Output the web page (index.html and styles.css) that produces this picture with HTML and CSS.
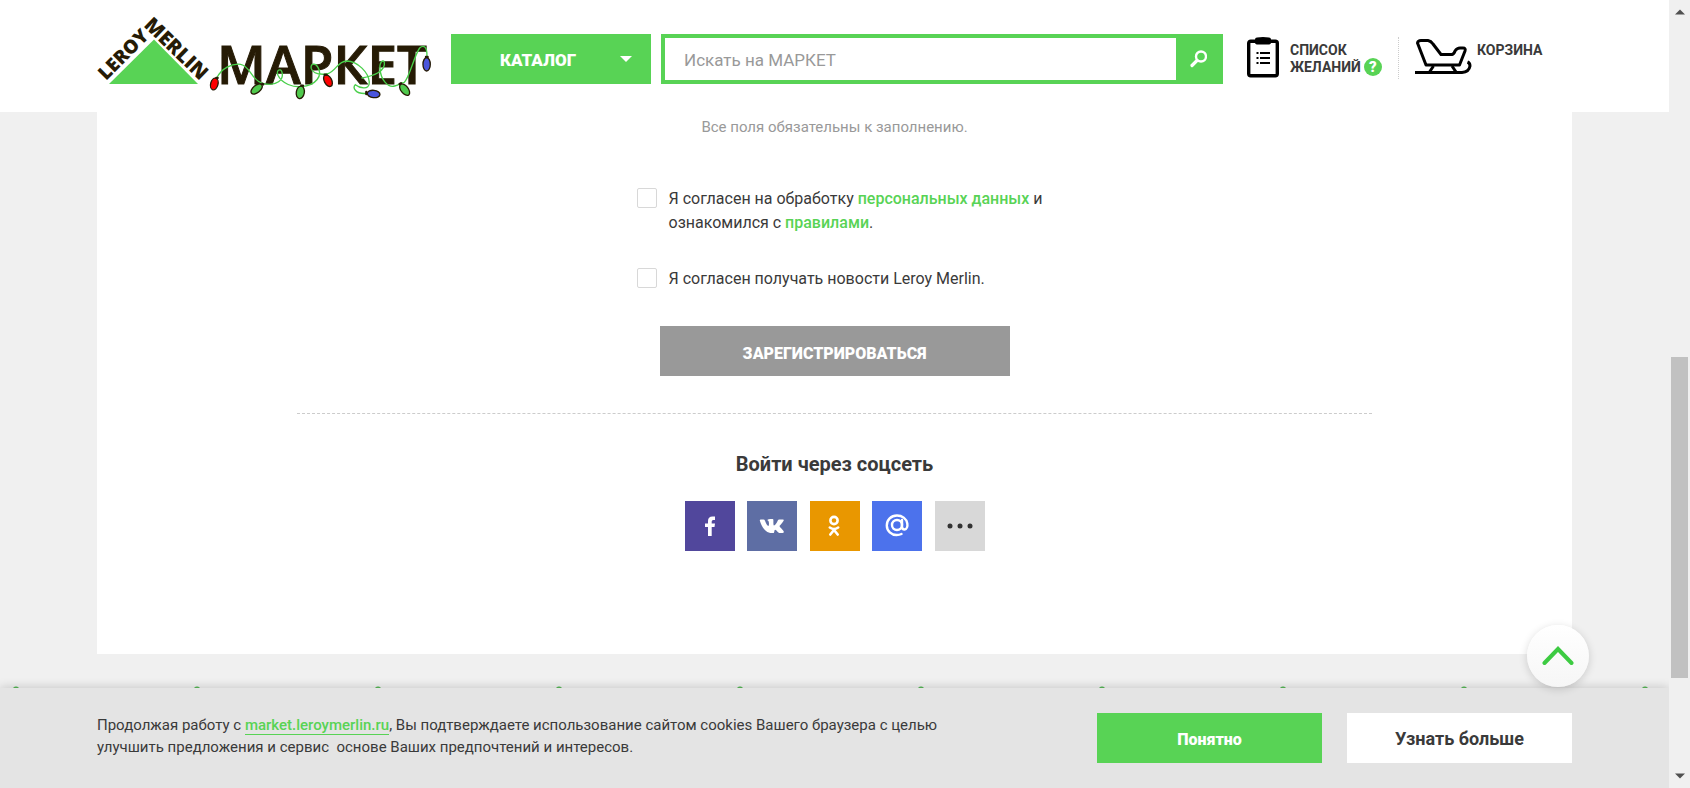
FILE: index.html
```html
<!DOCTYPE html>
<html lang="ru">
<head>
<meta charset="utf-8">
<meta name="viewport" content="width=device-width, initial-scale=1">
<title>Леруа Мерлен МАРКЕТ — Регистрация</title>
<link rel="stylesheet" href="styles.css">
</head>
<body>
<div class="page">
  <header class="header">
    <a class="logo" href="#" aria-label="Leroy Merlin МАРКЕТ">
      <svg class="logo-art" width="336" height="112" viewBox="97 0 336 112">
        <path d="M154 39.500 198 84H109Z" fill="#58d355"/>
        <g class="logo-text" fill="#261b05">
          <text font-size="19" transform="translate(106 81) rotate(-45)">LEROY</text>
          <text font-size="20" transform="translate(143 26) rotate(44)">MERLIN</text>
          <text class="logo-market" x="217" y="84" font-size="53">МАРКЕТ</text>
        </g>
        <g transform="translate(80 0) scale(.3333)" stroke-linecap="round">
          <g fill="none" stroke="#49cf4a" stroke-width="4">
            <path d="M410 234C425 205 455 190 482 193C512 198 512 240 548 250C590 262 614 238 605 214C600 204 588 212 594 226C606 252 640 262 664 260C710 256 728 226 714 202C706 188 690 190 694 206C699 222 722 224 742 222"/>
            <path d="M742 222C770 212 772 184 800 183C834 184 866 218 868 246C869 274 836 262 826 254C818 262 824 284 862 280"/>
            <path d="M846 234C880 228 918 214 913 186C909 178 898 186 900 206C902 240 925 264 944 258C962 254 962 246 972 248C988 236 1002 168 1019 144C1030 134 1042 138 1041 170"/>
          </g>
          <g stroke="#261b05" stroke-width="4">
            <ellipse cx="403" cy="252" rx="11" ry="18" fill="#f00" transform="rotate(15 403 252)"/>
            <ellipse cx="530" cy="267" rx="11" ry="20" fill="#4fc94d" transform="rotate(50 530 267)"/>
            <ellipse cx="661" cy="277" rx="12" ry="19" fill="#4fc94d" transform="rotate(10 661 277)"/>
            <ellipse cx="744" cy="242" rx="11" ry="19" fill="#f00" transform="rotate(-28 744 242)"/>
            <ellipse cx="881" cy="282" rx="19" ry="11" fill="#4a55dc" transform="rotate(6 881 282)"/>
            <ellipse cx="974" cy="269" rx="11" ry="20" fill="#4fc94d" transform="rotate(-38 974 269)"/>
            <ellipse cx="1040" cy="193" rx="11" ry="20" fill="#4a55dc"/>
            <path d="M409 234h4M547 251l3 2M664 257h5M734 224h5M859 276v6M959 252l4-2M1038 171h5" stroke-width="7"/>
          </g>
        </g>
      </svg>
    </a>
    <button class="catalog" type="button">
      <span class="catalog-label">КАТАЛОГ</span>
      <svg class="catalog-arrow" width="12" height="6" viewBox="0 0 12 6"><path d="M0 0H12L6 6Z" fill="#fff"/></svg>
    </button>
    <form class="search" role="search">
      <input class="search-input" type="search" placeholder="Искать на МАРКЕТ" aria-label="Искать на МАРКЕТ">
      <button class="search-button" type="button" aria-label="Найти">
        <svg width="18" height="18" viewBox="0 0 18 18" fill="none" stroke="#fff"><circle cx="12" cy="6.500" r="5" stroke-width="2.400"/><path d="M8 10.500 3 15.500" stroke-width="3.200" stroke-linecap="round"/></svg>
      </button>
    </form>
    <nav class="tools">
      <div class="wishlist">
        <svg width="32" height="42" viewBox="0 0 32 42"><rect x="1.700" y="4.200" width="28.600" height="34.600" rx="2" fill="#fff" stroke="#000" stroke-width="3.400"/><path d="M8 2.500Q8 .500 10 .500Q16-.500 22 .500Q24 .500 24 2.500V5.500Q24 7.500 21 7.500H11Q8 7.500 8 5.500Z"/><path d="M13 16H23M13 21H23M13 26H23" stroke="#000" stroke-width="2"/><path d="M9.500 16h2M9.500 21h2M9.500 26h2" stroke="#000" stroke-width="2"/></svg>
        <div class="tool-label"><a class="tool-link" href="#">СПИСОК<br>ЖЕЛАНИЙ</a><button class="help" type="button" aria-label="Что такое список желаний?">?</button></div>
      </div>
      <a class="tool-link cart" href="#">
        <svg width="57" height="36" viewBox="0 0 57 36" fill="none" stroke="#000" stroke-width="3" stroke-linejoin="round"><path d="M2.500 4Q3 1.500 6 1.500H13Q16 2 18 5L26 15.500H37Q39 15 40 12Q42 9 45 9H48Q51 9 50 12L44.500 26H11L2.500 4Z"/><path d="M18.500 27 14.500 33M37 27 41 33"/><path d="M0 33.500H47Q54 33 55 27Q55 24 52.500 23"/></svg>
        <span>КОРЗИНА</span>
      </a>
    </nav>
  </header>

  <main class="main">
    <form class="panel">
      <p class="note">Все поля обязательны к заполнению.</p>
      <div class="consents">
        <div class="consent">
          <input class="check" type="checkbox" id="agree-data">
          <label for="agree-data">Я согласен на обработку <a href="#">персональных данных</a> и ознакомился с <a href="#">правилами</a>.</label>
        </div>
        <div class="consent">
          <input class="check" type="checkbox" id="agree-news">
          <label for="agree-news">Я согласен получать новости Leroy Merlin.</label>
        </div>
      </div>
      <button class="register" type="button">ЗАРЕГИСТРИРОВАТЬСЯ</button>
      <div class="divider"></div>
      <h2 class="social-title">Войти через соцсеть</h2>
      <div class="socials">
        <button class="social fb" type="button" aria-label="Facebook"><svg width="24" height="24" viewBox="0 0 24 24"><path d="M10 22V13H7V9.500H10V7Q10 2.500 14.500 2.500H17V6H15.200Q13.700 6 13.700 7.500V9.500H17L16.500 13H13.700V22Z" fill="#fff"/></svg></button>
        <button class="social vk" type="button" aria-label="ВКонтакте"><svg width="26" height="24" viewBox="0 0 26 24"><path d="M13 19C6.500 19 3 13.500.800 6.500Q.700 5.500 1.700 5.500H4.500Q5.500 5.500 6 6.800C7 9.800 8.500 12 9.300 12C10.200 12 10.200 8 9.400 7Q9 6.400 8.300 6.200C9 5 14 4.800 14.300 5.600C14.600 6.400 14 11.300 15 11.500C16 11.600 18 8.600 18.800 6.500Q19.200 5.500 20.200 5.500H24C27 5.500 20.500 11.500 20.500 12.300C20.500 13 25.500 17 24.800 18.300Q24.500 19 23.500 19H20.600C19.200 19 17.300 15.700 16.200 15.700C15 15.700 15.700 19 14.400 19Z" fill="#fff"/></svg></button>
        <button class="social ok" type="button" aria-label="Одноклассники"><svg width="24" height="24" viewBox="0 0 24 24" fill="none" stroke="#fff" stroke-width="2.600" stroke-linecap="round"><circle cx="11" cy="6.500" r="3.600"/><path d="M6.800 13.500Q11 16.500 15.200 13.500M11 16 7.300 20.500M11 16 14.700 20.500"/></svg></button>
        <button class="social mail" type="button" aria-label="Mail.ru"><svg width="26" height="26" viewBox="0 0 26 26" fill="none" stroke="#fff" stroke-width="2.400" stroke-linecap="round"><circle cx="13" cy="12" r="5"/><path d="M18 7V13.500Q18 16.500 20.500 16.500C23 16 23.700 13 23.300 10.500C22.500 5.500 18 2.500 13 2.500C7 2.500 2.800 7 2.800 12.500C2.800 18 7.500 22 12.500 22Q15.500 22 17.500 21"/></svg></button>
        <button class="social more" type="button" aria-label="Другие соцсети"><svg width="26" height="6" viewBox="0 0 26 6" fill="#333"><circle cx="3" cy="3" r="2.500"/><circle cx="13" cy="3" r="2.500"/><circle cx="23" cy="3" r="2.500"/></svg></button>
      </div>
    </form>
  </main>

  <div class="garland"></div>

  <section class="cookies">
    <p class="cookies-text">Продолжая работу с <a href="#">market.leroymerlin.ru</a>, Вы подтверждаете использование сайтом cookies Вашего браузера с целью улучшить предложения и сервис &nbsp;основе Ваших предпочтений и интересов.</p>
    <button class="cookie-button accept" type="button">Понятно</button>
    <button class="cookie-button details" type="button">Узнать больше</button>
    <button class="to-top" type="button" aria-label="Наверх"><svg width="32" height="20" viewBox="0 0 32 20"><path d="M2.500 17 16 3 29.500 17" fill="none" stroke="#3dcb42" stroke-width="4" stroke-linecap="round"/></svg></button>
  </section>
</div>
<div class="scrollbar" aria-hidden="true">
  <svg width="10" height="6" viewBox="0 0 10 6"><path d="M0 5.500H10L5 .500Z" fill="#505050"/></svg>
  <div class="track"><div class="thumb"></div></div>
  <svg width="10" height="6" viewBox="0 0 10 6"><path d="M0 .500H10L5 5.500Z" fill="#505050"/></svg>
</div>
</body>
</html>
```
FILE: styles.css
```css
* { box-sizing: border-box; }

body {
  margin: 0;
  height: 100vh;
  display: flex;
  overflow: hidden;
  background: #f0f0f0;
  color: #3a3a3a;
  font-family: Roboto, "Open Sans", sans-serif;
  font-size: 16px;
  line-height: 24px;
}

button, input { font: inherit; margin: 0; }
button { border: 0; padding: 0; cursor: pointer; display: flex; align-items: center; justify-content: center; }
svg { display: block; flex: none; }
a { color: #58d355; text-decoration: none; }

.page { flex: 1; min-width: 0; display: flex; flex-direction: column; }

/* Header */
.header { display: flex; align-items: center; height: 112px; padding: 0 97px; background: #fff; }
.logo { margin-right: 18px; }
.logo-art { overflow: visible; }
.logo-text { font-family: "Open Sans", sans-serif; font-weight: 800; }
.logo-market { font-weight: 600; stroke: #261b05; stroke-width: 1px; }
.catalog { width: 200px; height: 50px; margin: 6px 10px 0 0; background: #58d355; color: #fff; font-size: 17px; font-weight: 900; }
.catalog-label { flex: 1; padding: 2px 0 0 5px; }
.catalog-arrow { margin-right: 19px; }
.search { flex: 1; min-width: 0; display: flex; height: 50px; margin-top: 6px; border: 4px solid #58d355; }
.search-input { flex: 1; min-width: 0; border: 0; padding: 2px 19px 0; font-size: 17px; color: #333; background: #fff; }
.search-input::placeholder { color: #999; opacity: 1; }
.search-button { width: 43px; background: #58d355; }
.tools { display: flex; width: 349px; padding: 4px 0 0 24px; font-size: 14px; font-weight: 700; line-height: 17px; }
.tool-link { color: #3a3a3a; }
.wishlist { display: flex; gap: 11px; width: 152px; height: 42px; border-right: 1px dotted #ccc; }
.tool-label { display: flex; align-items: flex-end; gap: 3px; height: 39px; }
.help { width: 18px; height: 18px; border-radius: 50%; background: #58d355; color: #fff; font-size: 15px; font-weight: 900; line-height: 18px; }
.cart { display: flex; gap: 5px; padding: 2px 0 0 16px; }
.cart span { padding-top: 3px; }

/* Registration panel */
.main { padding: 0 97px; }
.panel { display: flex; flex-direction: column; align-items: center; height: 542px; padding: 3px 0 0; background: #fff; }
.note { margin: 0; color: #999; font-size: 15px; }
.consents { display: flex; flex-direction: column; gap: 32px; width: 420px; margin: 48px 0 0 24px; }
.consent { display: flex; align-items: flex-start; gap: 12px; }
.check { appearance: none; flex: none; width: 20px; height: 20px; margin-top: 1px; border: 1px solid #d8d8d8; border-radius: 2px; background: #fff; }
.consent a, .cookies-text a { font-weight: 500; }
.register { width: 350px; height: 50px; margin-top: 35px; padding-top: 5px; background: #999; color: #fff; font-weight: 900; }
.divider { align-self: stretch; margin: 37px 200px 0; border-top: 1px dashed #ccc; }
.social-title { margin: 38px 0 0; font-size: 20px; line-height: 24px; font-weight: 700; }
.socials { display: flex; justify-content: space-between; width: 300px; margin-top: 25px; }
.social { width: 50px; height: 50px; }
.fb { background: #51479c; }
.vk { background: #5e6ea4; }
.ok { background: #e99700; }
.mail { background: #4c72ec; }
.more { background: #d8d8d8; }

.garland { flex: 1; background: radial-gradient(circle at 16px 4px, #58b858 3px, transparent 4px) 0 100% / 181px 2px repeat-x; }

/* Cookie notice */
.cookies { position: relative; display: flex; align-items: center; gap: 25px; height: 100px; padding: 0 97px; background: #e4e4e4; box-shadow: 0 0 10px rgba(0, 0, 0, .2); }
.cookies-text { flex: 1; margin: 0 105px 0 0; padding-bottom: 4px; font-size: 15px; line-height: 22px; }
.cookies-text a { border-bottom: 1px solid #58d355; }
.cookie-button { flex: none; width: 225px; height: 50px; padding-top: 2px; font-weight: 700; }
.accept { padding-top: 4px; background: #58d355; color: #fff; font-size: 16px; font-weight: 900; }
.details { background: #fff; color: #3a3a3a; font-size: 18px; }
.to-top { position: absolute; right: 80px; bottom: 101px; width: 62px; height: 62px; border-radius: 50%; background: linear-gradient(#fff, #f6f6f6); box-shadow: 0 2px 8px rgba(0, 0, 0, .16); }

/* Scrollbar */
.scrollbar { position: relative; display: flex; flex-direction: column; align-items: center; width: 21px; padding: 9px 0; background: #f0f0f0; }
.track { flex: 1; padding-top: 342px; }
.thumb { width: 17px; height: 321px; background: #c1c1c1; }
```
